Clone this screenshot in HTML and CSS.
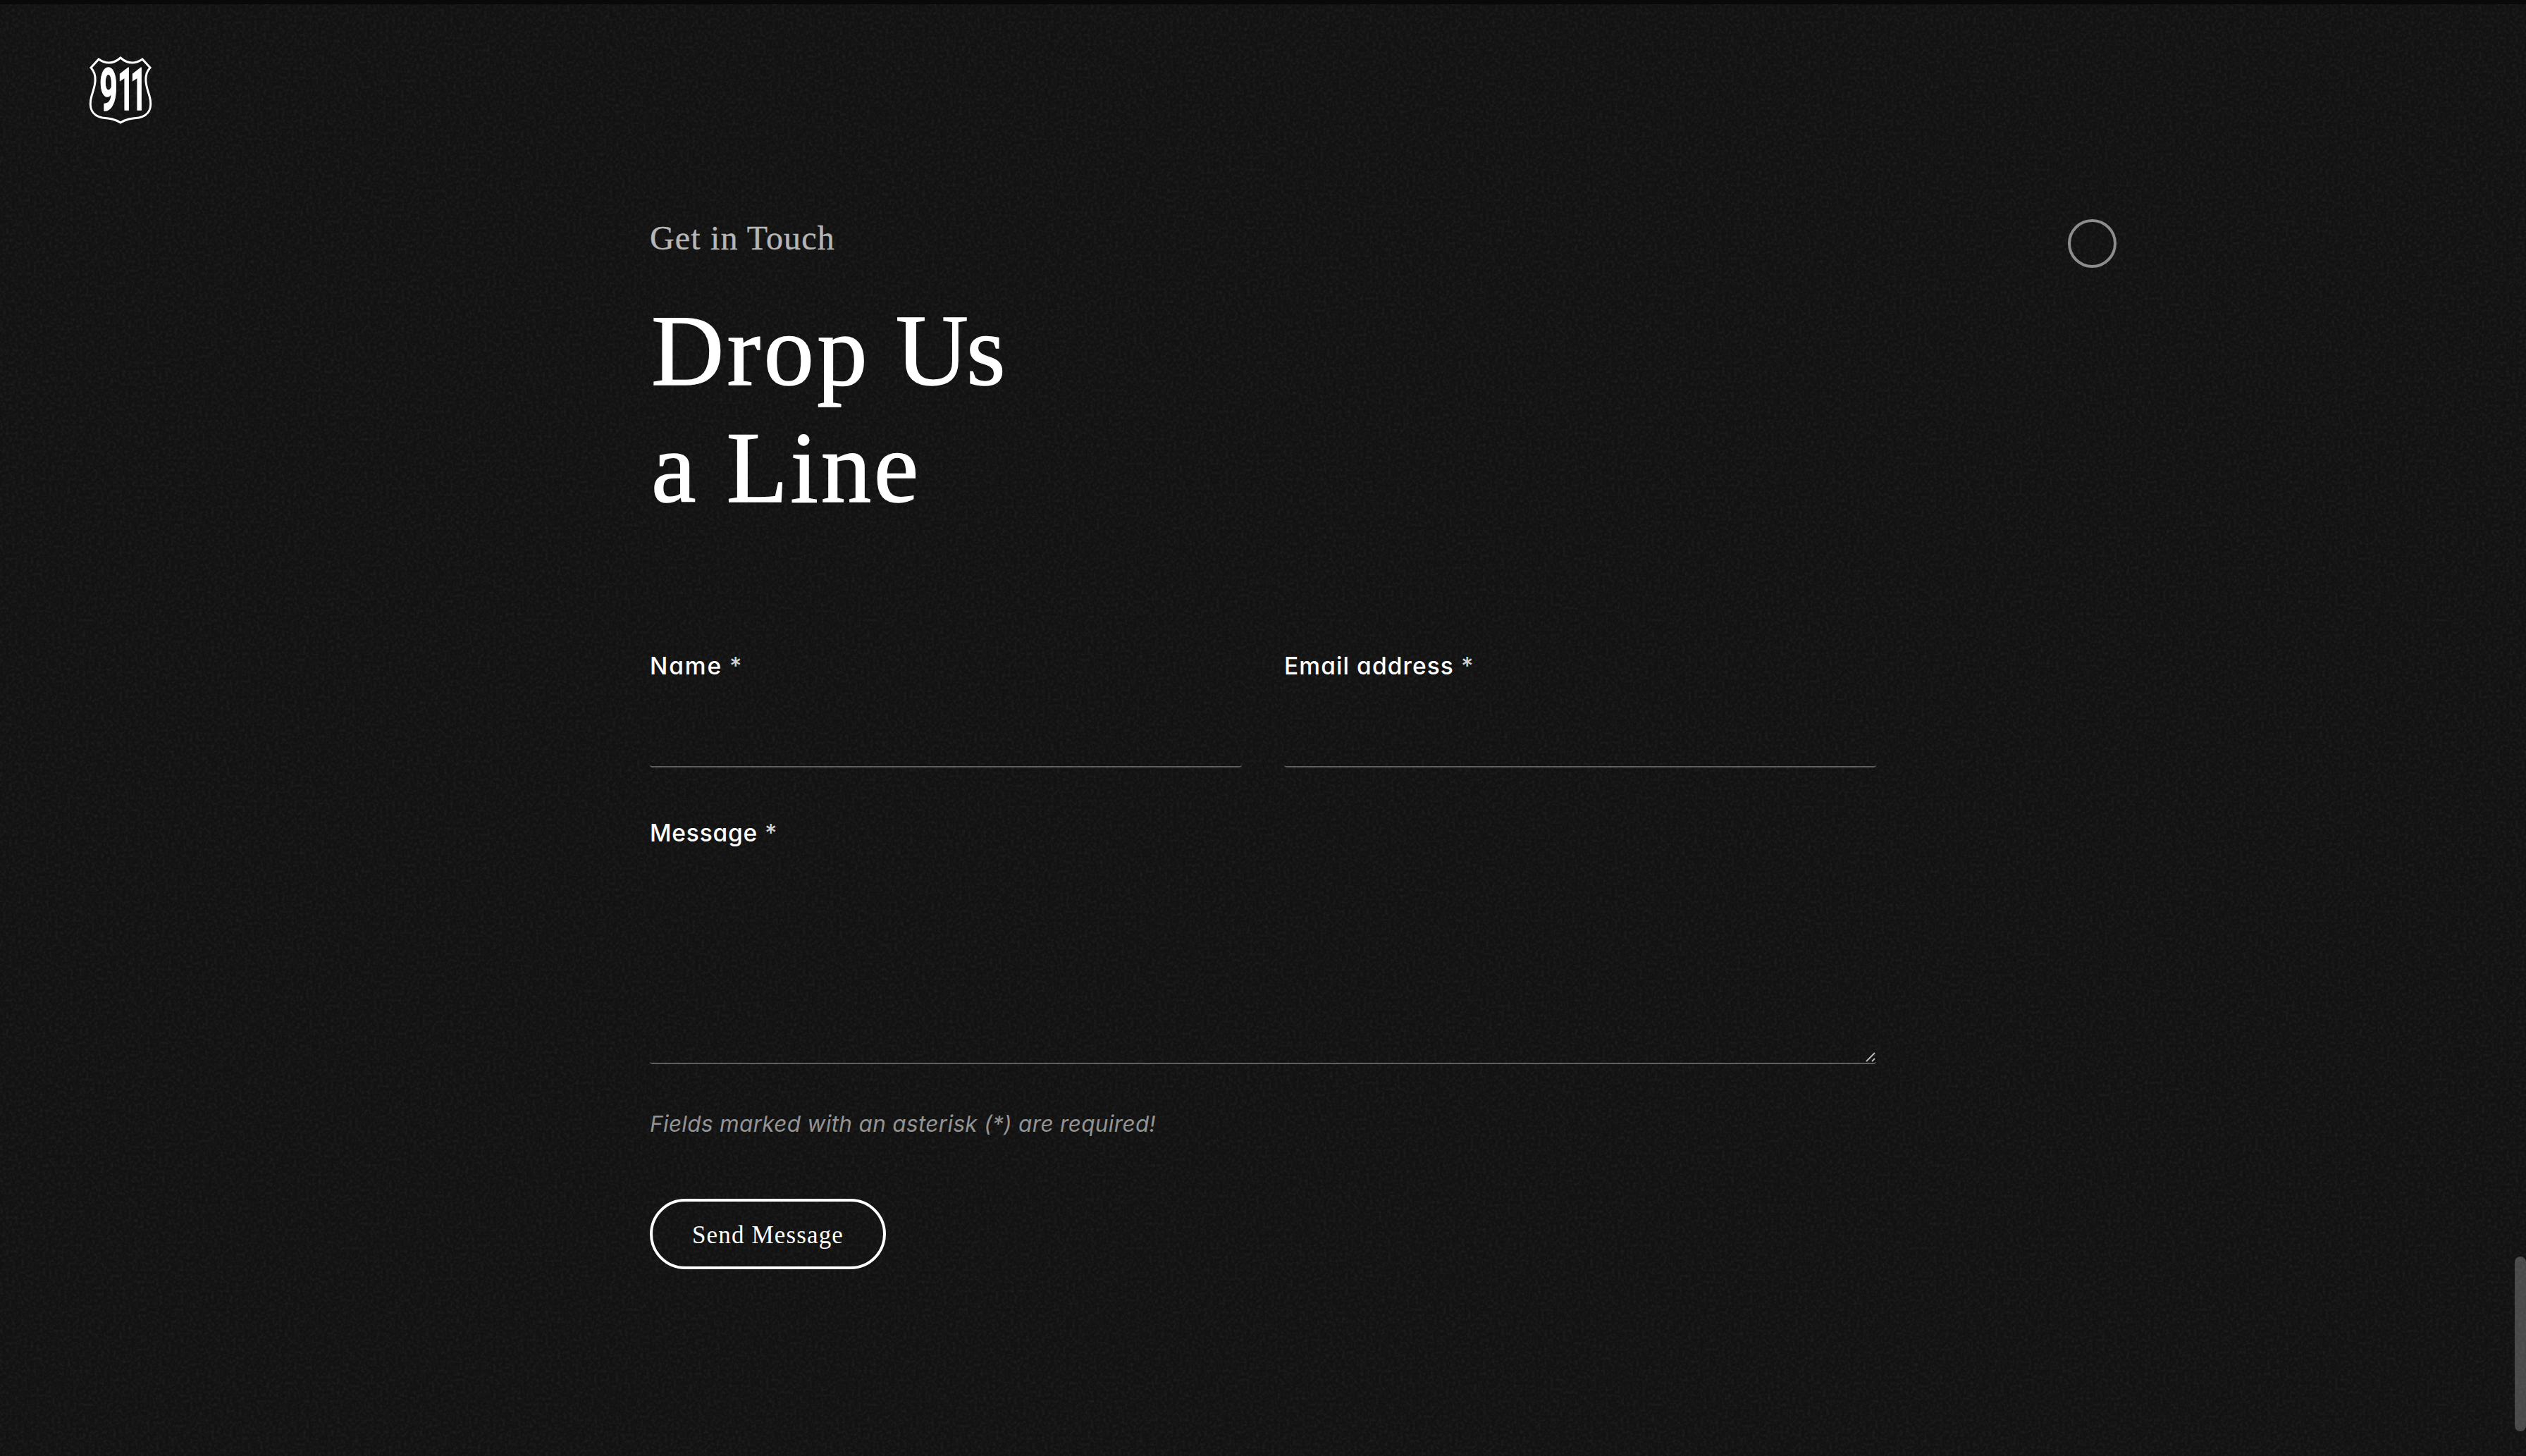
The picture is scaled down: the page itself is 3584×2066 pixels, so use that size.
FILE: index.html
```html
<!DOCTYPE html>
<html lang="en">
<head>
<meta charset="utf-8">
<title>911 – Get in Touch</title>
<link rel="stylesheet" href="styles.css">
</head>
<body>
<header class="topbar">
  <svg class="logo" viewBox="0 0 120 120" role="img" aria-label="911">
    <path class="shield" d="M30 14 Q46 25 61 12 Q76 25 92 14 L103 26 C93 37 97 51 102 66 C107 84 101 94 87 97 C76 98 69 99 61 104 C53 99 46 98 35 97 C21 94 15 84 20 66 C25 51 29 37 19 26 Z"/>
    <g class="digits">
      <text transform="translate(31.200 86) scale(.53 1)">9</text>
      <text transform="translate(57 86) scale(.47 1)">1</text>
      <text transform="translate(75 86) scale(.47 1)">1</text>
    </g>
  </svg>
</header>
<main class="contact">
  <p class="eyebrow">Get in Touch</p>
  <h1 class="title"><span class="line"><span class="word-drop">Drop</span> <span class="word-us">Us</span></span><span class="line line-two">a Line</span></h1>
  <form class="form">
    <div class="row">
      <div class="field">
        <label class="label" for="name"><span class="word-name">Name</span><span class="star">*</span></label>
        <input class="control" id="name" type="text">
      </div>
      <div class="field">
        <label class="label" for="email"><span class="word-email">Email address</span><span class="star">*</span></label>
        <input class="control" id="email" type="email">
      </div>
    </div>
    <div class="field message">
      <label class="label" for="message"><span class="word-message">Message</span><span class="star">*</span></label>
      <textarea class="control area" id="message"></textarea>
      <svg class="grip" viewBox="0 0 16 16"><path d="M2 14 14 2M10 14 14 10"/></svg>
    </div>
    <p class="note">Fields marked with an asterisk (*) are required!</p>
    <button class="send" type="button">Send Message</button>
  </form>
</main>
<div class="cursor"></div>
<div class="scroll-thumb"></div>
<svg class="grain" aria-hidden="true">
  <filter id="grain" x="0" y="0" width="100%" height="100%">
    <feTurbulence type="fractalNoise" baseFrequency=".23" numOctaves="3" seed="4"/>
    <feColorMatrix values="0 0 0 0 1  0 0 0 0 1  0 0 0 0 1  .12 0 0 0 -.05"/>
  </filter>
  <rect width="100%" height="100%" filter="url(#grain)"/>
</svg>
</body>
</html>
```
FILE: styles.css
```css
* { box-sizing: border-box; }
body {
  margin: 0;
  height: 2066px;
  overflow: hidden;
  position: relative;
  background: #121212;
  border-top: 6px solid #090909;
  color: #fff;
  font-family: Inter, "Open Sans", sans-serif;
  font-feature-settings: "cv11";
}
p, h1 { margin: 0; font-weight: 400; }

.topbar { height: 302px; padding: 64px 0 0 110px; }
.logo { display: block; width: 120px; height: 120px; }
.shield { fill: none; stroke: #fff; stroke-width: 3; stroke-linejoin: miter; }
.digits {
  fill: #fff;
  stroke: #fff;
  stroke-width: 1.6;
  font: 700 84px Roboto, sans-serif;
}

.contact { width: 1740px; margin-left: 922px; }
.eyebrow {
  font: 48px/60px "Liberation Serif", serif;
  letter-spacing: 1.15px;
  color: #b5b5b5;
  -webkit-text-stroke: .4px #b5b5b5;
}
.title {
  margin-top: 47px;
  padding-left: 2px;
  font: 143px/166px "Liberation Serif", serif;
  -webkit-text-stroke: 1.4px #fff;
}
.line { display: block; }
.word-drop { letter-spacing: 4.3px; }
.word-us { letter-spacing: -3px; }
.line-two { letter-spacing: 3.6px; }

.form { margin-top: 173px; }
.row { display: grid; grid-template-columns: 1fr 1fr; gap: 60px; }
.field { display: flex; flex-direction: column; }
.label {
  display: flex;
  gap: 10px;
  font-size: 33.5px;
  font-weight: 500;
  line-height: 50px;
}
.word-name { letter-spacing: 1.9px; }
.word-email { letter-spacing: 1.1px; }
.word-message { letter-spacing: .8px; }
.star { color: #d0d0d0; }
.control {
  display: block;
  width: 100%;
  height: 119px;
  padding: 0;
  background: none;
  border: 0 solid #5d5d5d;
  border-bottom-width: 2px;
  border-radius: 4px;
  color: #fff;
  font: inherit;
  outline: 0;
}
.message { position: relative; margin-top: 68px; }
.area { height: 303px; resize: none; }
.grip {
  position: absolute;
  right: 0;
  bottom: 2px;
  width: 16px;
  height: 16px;
  fill: none;
  stroke: #b8b8b8;
  stroke-width: 2;
}
.note {
  margin-top: 62px;
  font-size: 31.5px;
  font-style: italic;
  font-weight: 400;
  line-height: 46px;
  letter-spacing: .33px;
  color: #929292;
}
.send {
  display: block;
  width: 335px;
  height: 100px;
  margin-top: 83px;
  padding: 4px 0 0;
  border: 4px solid #fff;
  border-radius: 50px;
  background: none;
  color: #fff;
  font: 35px/40px "Liberation Serif", serif;
  letter-spacing: 1.15px;
}
.cursor {
  position: absolute;
  left: 2934px;
  top: 305px;
  width: 69px;
  height: 69px;
  border: 4px solid #8b8b8b;
  border-radius: 50%;
}
.scroll-thumb {
  position: absolute;
  right: 0;
  top: 1777px;
  width: 16px;
  height: 248px;
  border-radius: 8px;
  background: #484848;
}
.grain {
  position: absolute;
  left: 0;
  top: -6px;
  width: 100%;
  height: 2066px;
  pointer-events: none;
}
```
